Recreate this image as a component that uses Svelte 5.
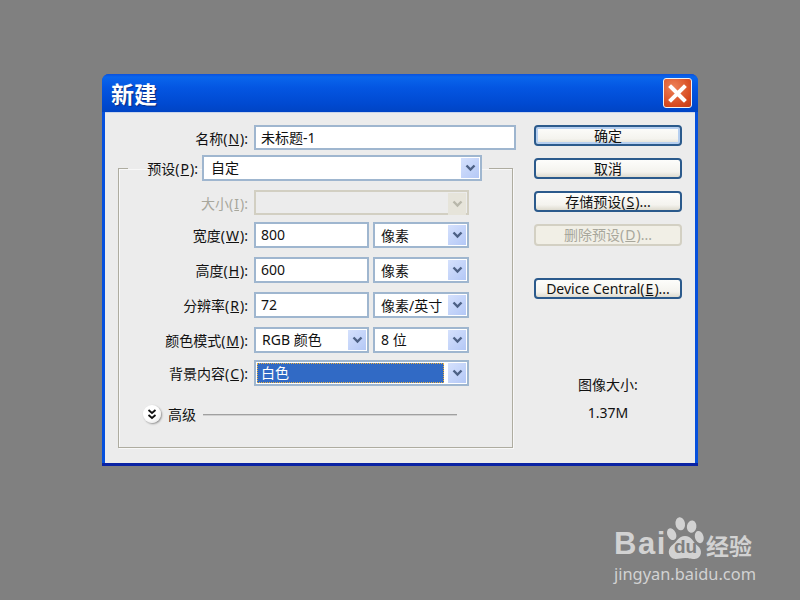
<script>
  const rows = [
    { name: '宽度', key: 'W', value: '800', unit: '像素' },
    { name: '高度', key: 'H', value: '600', unit: '像素' },
    { name: '分辨率', key: 'R', value: '72', unit: '像素/英寸' }
  ];
</script>

{#snippet chevron(cls = '')}
  <span class="arrow {cls}">
    <svg width="11" height="8" viewBox="0 0 11 8"><path d="M1.5 1.5 L5.5 5.5 L9.5 1.5" fill="none" stroke="currentColor" stroke-width="2.4"/></svg>
  </span>
{/snippet}

{#snippet label(name, key)}
  <span class="label">{name}(<u>{key}</u>):</span>
{/snippet}

<div class="page">
  <div class="dialog">
    <header class="titlebar">
      <span class="title">新建</span>
      <span class="close">
        <svg width="19" height="19" viewBox="0 0 19 19"><path d="M3 3 L16 16 M16 3 L3 16" stroke="#fff" stroke-width="4" stroke-linecap="square"/></svg>
      </span>
    </header>

    <div class="body">
      <div class="left">
        <div class="name-row">
          {@render label('名称', 'N')}
          <div class="field name-input">未标题-1</div>
        </div>

        <fieldset>
          <legend>
            {@render label('预设', 'P')}
            <div class="field select preset">自定{@render chevron()}</div>
          </legend>

          <div class="rows">
            <div class="row size-row">
              <span class="label disabled">大小(<u>I</u>):</span>
              <div class="field select disabled-field wide">{@render chevron('off')}</div>
            </div>

            {#each rows as r}
              <div class="row">
                {@render label(r.name, r.key)}
                <div class="field value">{r.value}</div>
                <div class="field select unit"><span class="low">{r.unit}</span>{@render chevron()}</div>
              </div>
            {/each}

            <div class="row">
              {@render label('颜色模式', 'M')}
              <div class="field select mode">RGB 颜色{@render chevron()}</div>
              <div class="field select unit">8 位{@render chevron()}</div>
            </div>

            <div class="row bg-row">
              {@render label('背景内容', 'C')}
              <div class="field select wide focus">
                <span class="focused">白色</span>{@render chevron()}
              </div>
            </div>
          </div>

          <div class="advanced">
            <span class="round">
              <svg width="10" height="11" viewBox="0 0 10 11"><path d="M1.5 1 L5 4 L8.5 1 M1.5 6 L5 9 L8.5 6" fill="none" stroke="#111" stroke-width="1.8"/></svg>
            </span>
            <span class="adv-text">高级</span>
            <span class="rule"></span>
          </div>
        </fieldset>
      </div>

      <div class="right">
        <button class="btn default">确定</button>
        <button class="btn">取消</button>
        <button class="btn">存储预设(<u>S</u>)...</button>
        <button class="btn off">删除预设(<u>D</u>)...</button>
        <button class="btn device">Device Central(<u>E</u>)...</button>
        <div class="info">图像大小:</div>
        <div class="info size">1.37M</div>
      </div>
    </div>
  </div>

  <div class="watermark">
    <div class="logo">
      <span class="bai">Bai</span>
      <span class="paw">
        <svg width="38" height="44" viewBox="0 0 40 46">
          <ellipse cx="15" cy="8" rx="5" ry="7" transform="rotate(-8 15 8)"/>
          <ellipse cx="27" cy="11" rx="5" ry="6.5" transform="rotate(10 27 11)"/>
          <ellipse cx="6" cy="19" rx="4.5" ry="6.5" transform="rotate(-25 6 19)"/>
          <ellipse cx="35" cy="22" rx="4.5" ry="6.5" transform="rotate(-15 35 22)"/>
          <path d="M20 21 C27 21 28 27 33 31 C39 35 38 45 30 45 C25 45 24 44 20 44 C16 44 14 45 10 45 C2 45 1 35 6 31 C12 27 13 21 20 21 Z"/>
        </svg>
        <span class="du">du</span>
      </span>
      <span class="jy">经验</span>
    </div>
    <div class="url">jingyan.baidu.com</div>
  </div>
</div>

<style>
  :global(body) { margin: 0; }
  .page {
    position: relative;
    width: 800px;
    height: 600px;
    box-sizing: border-box;
    padding: 74px 0 0 102px;
    background: #808080;
    overflow: hidden;
    font-family: "Noto Sans", "Noto Sans CJK SC", sans-serif;
    font-size: 14px;
    color: #111;
  }
  .dialog {
    width: 596px;
    height: 392px;
    box-sizing: border-box;
    padding: 0 3px;
    border-radius: 7px 7px 0 0;
    border-bottom: 3px solid #0a23a4;
    background: #0650dc;
  }
  .titlebar {
    height: 38px;
    display: flex;
    align-items: center;
    justify-content: space-between;
    margin: 0 -3px;
    padding: 0 6px 0 9px;
    border-radius: 7px 7px 0 0;
    background: linear-gradient(#0a50dc 0, #0a66ec 8%, #0456e2 35%, #0049d0 80%, #0044c4 100%);
  }
  .title {
    font-family: "Noto Sans CJK SC", sans-serif;
    font-size: 23px;
    font-weight: 700;
    line-height: 38px;
    color: #fff;
    text-shadow: 1px 1px 1px #0a2a80;
  }
  .close {
    width: 27px;
    height: 28px;
    display: flex;
    align-items: center;
    justify-content: center;
    border: 1px solid #f2f2f2;
    border-radius: 3px;
    background: radial-gradient(circle at 35% 30%, #ee8258, #d6491f 70%, #c53a16);
  }
  .body {
    display: flex;
    height: 351px;
    background: #ececec;
    border-top: 1px solid #c9d4ea;
    box-sizing: border-box;
  }
  .left { width: 395px; flex: none; margin-left: 13px; }
  .name-row { display: flex; align-items: center; gap: 6px; margin-top: 12px; }
  .name-row .label { flex: 0 0 130px; }
  .label { text-align: right; white-space: nowrap; }
  .label u, .btn u { margin: 0 1px; text-underline-offset: 1px; }
  .label.disabled { color: #a8a79c; }
  .field {
    box-sizing: border-box;
    height: 26px;
    display: flex;
    align-items: center;
    padding-left: 5px;
    background: #fff;
    border: 2px solid #9fb6cf;
    line-height: 1;
  }
  .name-input { flex: 0 0 262px; height: 25px; }
  fieldset {
    margin: 5px 0 0;
    padding: 0;
    box-sizing: border-box;
    height: 293px;
    border: 1px solid #aeaca0;
    box-shadow: inset 1px 1px 0 #f8f8f8, 1px 1px 0 #f8f8f8;
    min-width: 0;
  }
  legend {
    display: flex;
    align-items: center;
    justify-content: flex-end;
    gap: 4px;
    box-sizing: border-box;
    width: 361px;
    margin: 0 0 -5px 9px;
    padding: 0 7px 0 0;
  }
  .select { position: relative; padding-left: 6px; }
  .preset { width: 280px; padding-left: 7px; }
  .low { padding-top: 2px; }
  .rows { display: flex; flex-direction: column; gap: 9px; padding-top: 14px; }
  .row { display: flex; align-items: center; gap: 4px; }
  .row .label { width: 129px; margin-right: 2px; }
  .size-row { margin-bottom: -2px; }
  .size-row .field { height: 25px; }
  .bg-row { margin-top: -2px; }
  .value { width: 115px; }
  .unit { width: 96px; }
  .mode { width: 115px; }
  .wide { width: 215px; }
  .disabled-field { background: #ececec; border-color: #d2cfc2; }
  .arrow {
    position: absolute;
    right: 1px;
    top: 1px;
    bottom: 1px;
    width: 18px;
    display: flex;
    align-items: center;
    justify-content: center;
    background: linear-gradient(135deg, #d5e1fd, #b4c8f6);
    color: #4d6185;
    box-sizing: border-box;
  }
  .arrow.off { background: #e6e4da; color: #b8b7aa; }
  .focus { padding-left: 1px; }
  .focused {
    box-sizing: border-box;
    flex: 0 0 187px;
    height: 20px;
    display: flex;
    align-items: center;
    padding-left: 4px;
    background: #316ac5;
    color: #fff;
    outline: 1px dotted #e8b040;
    outline-offset: -1px;
  }
  .advanced {
    display: flex;
    align-items: center;
    margin: 18px 0 0 24px;
    height: 20px;
  }
  .round {
    box-sizing: border-box;
    width: 18px;
    height: 18px;
    display: flex;
    align-items: center;
    justify-content: center;
    border-radius: 50%;
    background: radial-gradient(circle at 40% 35%, #fff 50%, #dcdcdc);
    box-shadow: 1px 1px 2px #8f8f8f;
  }
  .adv-text { margin-left: 7px; }
  .rule { width: 254px; height: 1px; margin-left: 7px; background: #a0a0a0; box-shadow: 0 1px 0 #d0d0d0; }

  .right {
    width: 148px;
    flex: none;
    margin-left: 21px;
    display: flex;
    flex-direction: column;
    align-items: stretch;
    padding-top: 12px;
  }
  .btn {
    box-sizing: border-box;
    height: 21px;
    margin: 0 0 12px;
    padding: 0;
    font: inherit;
    line-height: 1;
    color: #111;
    border: 2px solid #2b5a8c;
    border-radius: 4px;
    background: linear-gradient(#fdfdfb, #f4f3ee 70%, #dedbcf);
  }
  .default { box-shadow: inset 0 0 0 2px #b6cff0; }
  .off { height: 22px; color: #a8a79c; border-color: #d3d0c3; background: #f1efe6; margin-bottom: 32px; }
  .device { margin-bottom: 0; }
  .info { text-align: center; margin-top: 76px; line-height: 20px; }
  .size { margin-top: 8px; }

  .watermark {
    position: absolute;
    left: 614px;
    top: 514px;
    color: #d2d2d2;
  }
  .logo { display: flex; align-items: flex-end; height: 48px; }
  .bai {
    font-family: "Liberation Sans", sans-serif;
    font-weight: 700;
    font-size: 31px;
    line-height: 36px;
    width: 52px;
    letter-spacing: 1.5px;
  }
  .paw { position: relative; width: 38px; height: 48px; fill: #d2d2d2; }
  .paw svg { position: absolute; left: 0; top: 2px; }
  .du {
    position: absolute;
    left: 8px;
    bottom: 5px;
    font-family: "Liberation Sans", sans-serif;
    font-weight: 700;
    font-size: 19px;
    line-height: 20px;
    color: #808080;
  }
  .jy {
    font-family: "Noto Sans CJK SC", sans-serif;
    font-weight: 700;
    font-size: 23px;
    line-height: 34px;
    margin-left: 2px;
  }
  .url {
    font-family: "Noto Sans", sans-serif;
    font-size: 16.4px;
    line-height: 22px;
    margin-top: 1px;
    white-space: nowrap;
  }
</style>
